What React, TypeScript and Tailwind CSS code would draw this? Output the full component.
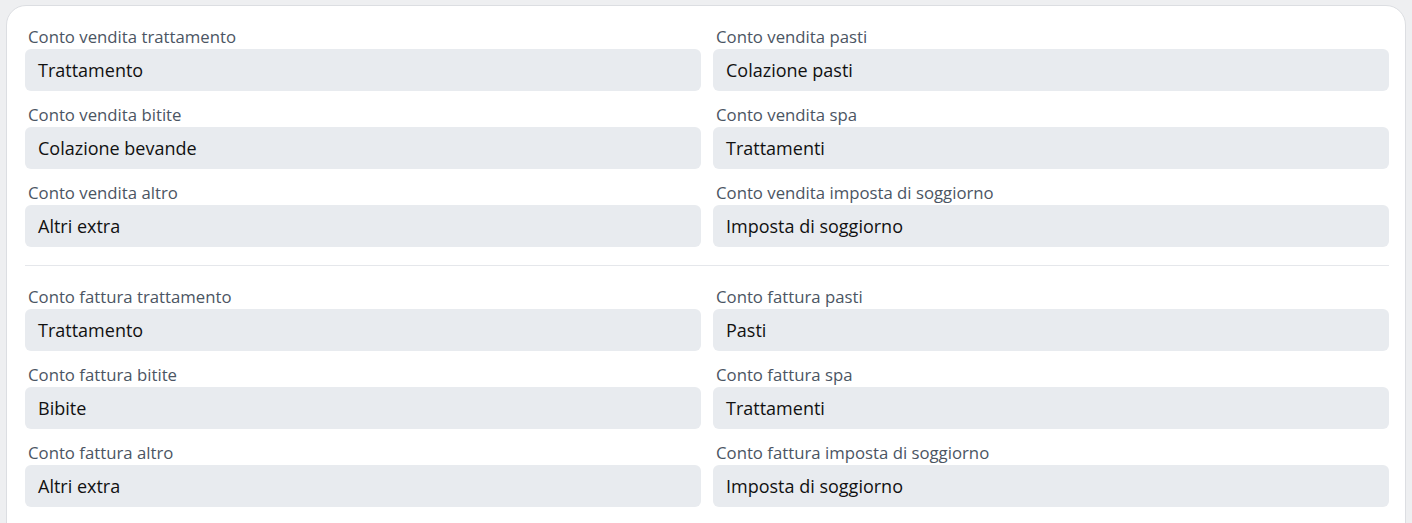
import React from 'react';

type Field = { label: string; value: string };

const sales: Field[] = [
  { label: 'Conto vendita trattamento', value: 'Trattamento' },
  { label: 'Conto vendita pasti', value: 'Colazione pasti' },
  { label: 'Conto vendita bitite', value: 'Colazione bevande' },
  { label: 'Conto vendita spa', value: 'Trattamenti' },
  { label: 'Conto vendita altro', value: 'Altri extra' },
  { label: 'Conto vendita imposta di soggiorno', value: 'Imposta di soggiorno' },
];

const invoices: Field[] = [
  { label: 'Conto fattura trattamento', value: 'Trattamento' },
  { label: 'Conto fattura pasti', value: 'Pasti' },
  { label: 'Conto fattura bitite', value: 'Bibite' },
  { label: 'Conto fattura spa', value: 'Trattamenti' },
  { label: 'Conto fattura altro', value: 'Altri extra' },
  { label: 'Conto fattura imposta di soggiorno', value: 'Imposta di soggiorno' },
];

function FieldBox({ label, value }: Field) {
  return (
    <div className="flex flex-col">
      <label className="h-5 pl-[3px] text-[16.75px] leading-[15px] text-[#4b5563]">{label}</label>
      <div className="flex h-[42px] items-center rounded-md bg-[#e8ebef] px-[13px] text-[18px] text-[#111111]">
        {value}
      </div>
    </div>
  );
}

function FieldGrid({ fields }: { fields: Field[] }) {
  return (
    <div className="grid grid-cols-2 gap-x-3 gap-y-4">
      {fields.map((f) => (
        <FieldBox key={f.label} {...f} />
      ))}
    </div>
  );
}

export default function App() {
  return (
    <div
      className="h-[523px] overflow-hidden bg-[#eeeff1] px-[6px] pt-[5px]"
      style={{ fontFamily: '"Open Sans", "Noto Sans", sans-serif' }}
    >
      <div className="h-[560px] rounded-t-[20px] border border-[#dcdee2] bg-white pl-[18px] pr-[16px] pt-[23px]">
        <FieldGrid fields={sales} />
        <div className="mb-[23px] mt-[18px] h-px bg-[#e5e7eb]" />
        <FieldGrid fields={invoices} />
      </div>
    </div>
  );
}
